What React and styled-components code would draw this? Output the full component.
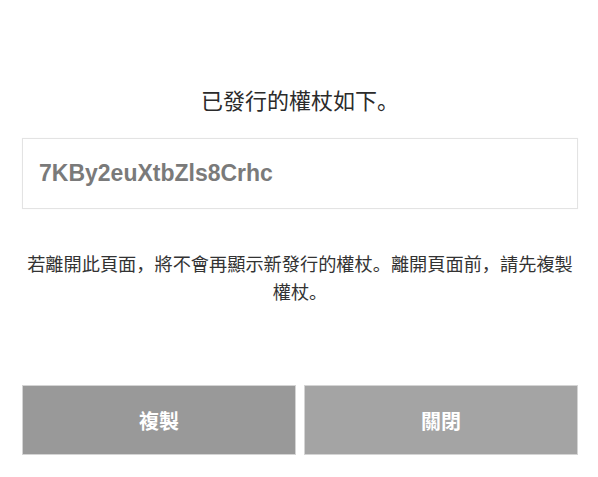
import React from "react";
import styled, { createGlobalStyle } from "styled-components";

const Global = createGlobalStyle`
  html, body { margin: 0; padding: 0; background: #ffffff; }
  body { font-family: "Noto Sans CJK SC", "Noto Sans CJK TC", "Liberation Sans", sans-serif; }
  * { box-sizing: border-box; }
`;

const Page = styled.div`
  width: 598px;
  height: 477px;
  padding: 84px 20px 0 22px;
  display: flex;
  flex-direction: column;
  background: #ffffff;
`;

const Title = styled.h2`
  margin: 0;
  font-size: 22px;
  line-height: 30px;
  font-weight: 400;
  color: #2b2b2b;
  text-align: center;
`;

const TokenBox = styled.div`
  margin-top: 24px;
  height: 71px;
  border: 1px solid #e3e3e3;
  box-shadow: 0 0 1px rgba(0, 0, 0, 0.06);
  display: flex;
  align-items: center;
  padding: 0 16px;
  font-family: "Liberation Sans", Arial, sans-serif;
  font-weight: 700;
  font-size: 23px;
  color: #7a7a7a;
`;

const Notice = styled.p`
  margin: 40px 2px 0;
  font-size: 18.2px;
  line-height: 28px;
  color: #333333;
  text-align: center;
`;

const Actions = styled.div`
  margin-top: 80px;
  display: grid;
  grid-template-columns: 1fr 1fr;
  gap: 8px;
`;

const ActionButton = styled.button`
  height: 70px;
  border: 1px solid #d4d4d4;
  background: ${(p) => p.$bg};
  color: #ffffff;
  font-family: "Noto Sans CJK SC", "Noto Sans CJK TC", sans-serif;
  font-size: 20px;
  font-weight: 700;
  cursor: pointer;
  padding: 0;
`;

export default function App() {
  return (
    <>
      <Global />
      <Page>
        <Title>已發行的權杖如下。</Title>
        <TokenBox>7KBy2euXtbZls8Crhc</TokenBox>
        <Notice>若離開此頁面，將不會再顯示新發行的權杖。離開頁面前，請先複製權杖。</Notice>
        <Actions>
          <ActionButton $bg="#999999">複製</ActionButton>
          <ActionButton $bg="#a4a4a4">關閉</ActionButton>
        </Actions>
      </Page>
    </>
  );
}
